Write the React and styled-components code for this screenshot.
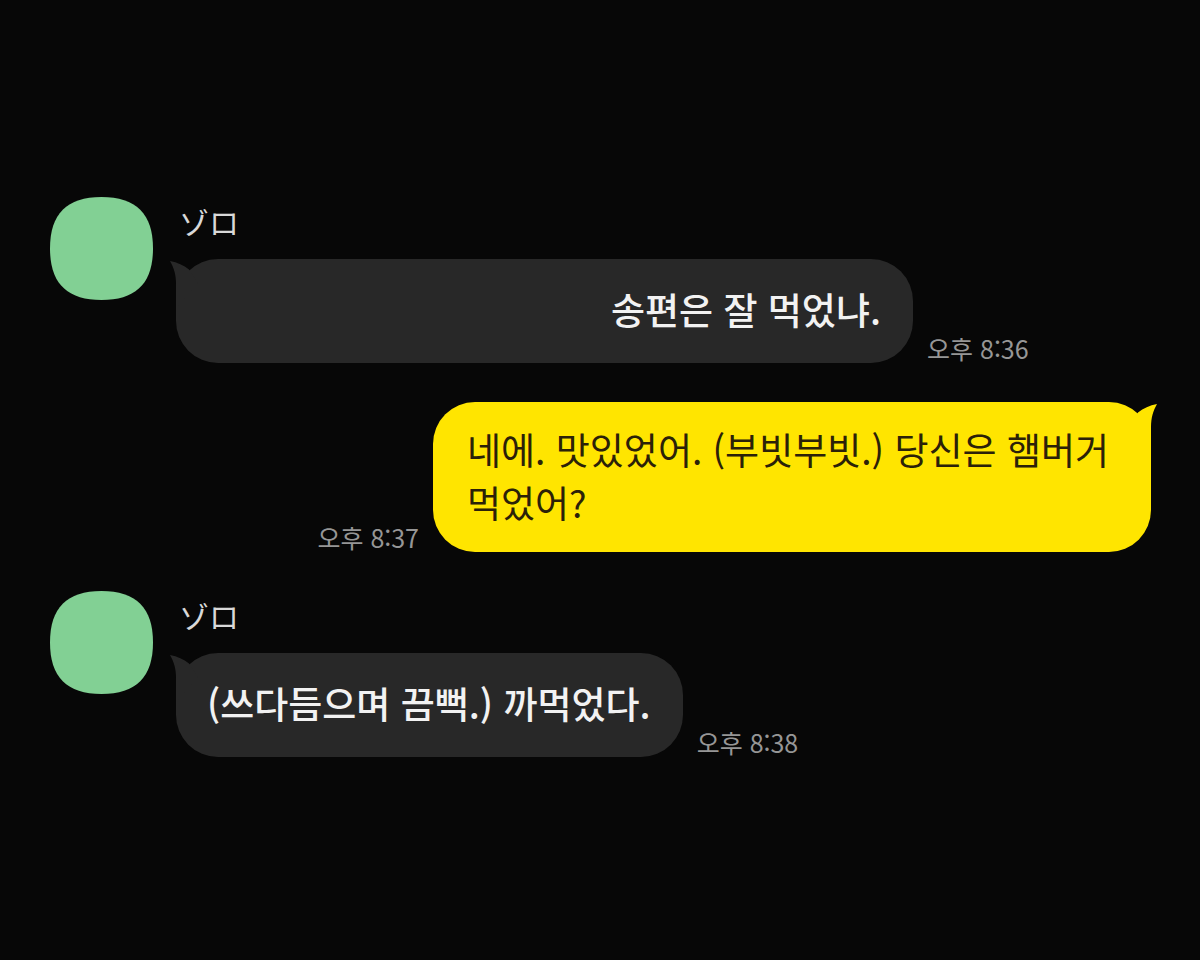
import React from "react";
import styled, { createGlobalStyle, css } from "styled-components";

const GlobalStyle = createGlobalStyle`
  * {
    box-sizing: border-box;
  }

  body {
    margin: 0;
    background: #070707;
    font-family: "Noto Sans CJK KR", "Noto Sans", sans-serif;
  }
`;

const Chat = styled.main`
  display: flex;
  flex-direction: column;
  justify-content: center;
  gap: 39px;
  min-height: 100vh;
  padding: 0 49px 6px 50px;
`;

const Message = styled.article`
  display: flex;
  align-items: flex-start;
  justify-content: ${({ $mine }) => ($mine ? "flex-end" : "flex-start")};
  gap: 23px;
`;

const Avatar = styled.svg`
  flex: none;
  width: 103px;
  height: 103px;
  fill: #82d094;
`;

const Content = styled.div`
  display: flex;
  flex-direction: column;
  flex: 1;
  min-width: 0;
`;

const Name = styled.div`
  height: 62px;
  padding: 2px 3px;
  font-family: "Noto Sans CJK JP", sans-serif;
  font-size: 30px;
  line-height: 44px;
  color: #d8d8d8;
`;

const Line = styled.div`
  display: flex;
  align-items: flex-end;
  gap: 14px;
`;

const Bubble = styled.div`
  position: relative;
  border-radius: 42px;
  font-size: 37px;
  line-height: 53px;
  word-break: keep-all;

  ${({ $mine }) =>
    $mine
      ? css`
          max-width: 718px;
          padding: 21px 34px 23px;
          background: #ffe500;
          color: #2b2108;
        `
      : css`
          padding: 24px 32px 27px 31px;
          background: #282828;
          color: #f2f2f2;
          font-weight: 500;
        `}

  ${({ $wide }) =>
    $wide &&
    css`
      flex: 0 1 737px;
      text-align: right;
    `}
`;

const TailShape = styled.svg`
  position: absolute;
  top: 0;
  width: 30px;
  height: 48px;
  fill: ${({ $mine }) => ($mine ? "#ffe500" : "#282828")};
  ${({ $mine }) =>
    $mine
      ? css`
          right: -6px;
          transform: scaleX(-1);
        `
      : css`
          left: -6px;
        `}
`;

const Time = styled.time`
  flex: none;
  font-size: 25px;
  line-height: 30px;
  color: #969696;
`;

const Tail = ({ mine }) => (
  <TailShape $mine={mine} viewBox="0 0 30 48" aria-hidden="true">
    <path d="M0 2C7.5 3.4 13.5 6.2 19 10.6L28 24L8 47H6V25C6 16 4 9 0 2Z" />
  </TailShape>
);

const Profile = () => (
  <Avatar viewBox="0 0 104 104" aria-hidden="true">
    <path d="M52 0C87 0 104 17 104 52C104 87 87 104 52 104C17 104 0 87 0 52C0 17 17 0 52 0Z" />
  </Avatar>
);

const Received = ({ name, text, time, dateTime, wide }) => (
  <Message>
    <Profile />
    <Content>
      <Name>{name}</Name>
      <Line>
        <Bubble $wide={wide}>
          <Tail />
          {text}
        </Bubble>
        <Time dateTime={dateTime}>{time}</Time>
      </Line>
    </Content>
  </Message>
);

const Sent = ({ text, time, dateTime }) => (
  <Message $mine>
    <Line>
      <Time dateTime={dateTime}>{time}</Time>
      <Bubble $mine>
        <Tail mine />
        {text}
      </Bubble>
    </Line>
  </Message>
);

const App = () => {
  return (
    <>
      <GlobalStyle />
      <Chat lang="ko">
        <Received
          name="ゾロ"
          text="송편은 잘 먹었냐."
          time="오후 8:36"
          dateTime="20:36"
          wide
        />
        <Sent
          text="네에. 맛있었어. (부빗부빗.) 당신은 햄버거 먹었어?"
          time="오후 8:37"
          dateTime="20:37"
        />
        <Received
          name="ゾロ"
          text="(쓰다듬으며 끔뻑.) 까먹었다."
          time="오후 8:38"
          dateTime="20:38"
        />
      </Chat>
    </>
  );
};

export default App;
